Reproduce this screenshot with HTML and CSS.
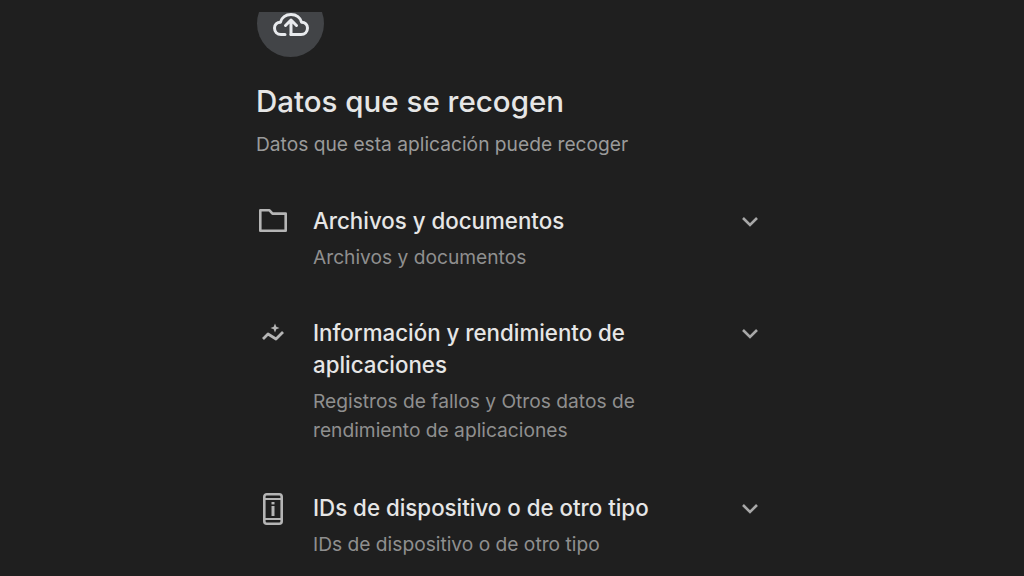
FILE: index.html
```html
<!DOCTYPE html>
<html lang="es">
<head>
<meta charset="utf-8">
<title>Datos que se recogen</title>
<link rel="stylesheet" href="styles.css">
</head>
<body>
<main class="page">
  <div class="badge-clip">
    <div class="badge">
      <svg class="cloud" viewBox="0 0 36 24" width="36" height="24" fill="none" stroke="currentColor" stroke-width="3" stroke-linecap="round" stroke-linejoin="round">
        <path d="M12 22.5H8C4.2 22.5 1.5 19.6 1.5 16C1.5 12.6 4 10.4 7.5 10.2C8.6 5.6 12.6 2.5 18 2.5C23.4 2.5 27.4 5.6 28.5 10.2C32 10.4 34.5 12.6 34.5 16C34.5 19.6 31.8 22.5 28 22.5H18"/>
        <path d="M18 22.5V8M12.5 13.5L18 8L23.5 13.5"/>
      </svg>
    </div>
  </div>
  <h1 class="title">Datos que se recogen</h1>
  <p class="subtitle">Datos que esta aplicación puede recoger</p>
  <section class="list">
    <article class="row row-a">
      <svg class="icon icon-folder" viewBox="0 0 30 25" width="30" height="25" fill="none" stroke="currentColor" stroke-width="2.6" stroke-linejoin="round">
        <path d="M2.3 2.3H11.5L14.5 5.6H27.7V22.7H2.3Z"/>
      </svg>
      <div class="text">
        <h2 class="head">Archivos y documentos</h2>
        <p class="desc">Archivos y documentos</p>
      </div>
      <svg class="chev" viewBox="0 0 20 12" width="20" height="12" fill="none" stroke="currentColor" stroke-width="2.6"><path d="M3 2L10 9L17 2"/></svg>
    </article>
    <article class="row row-b">
      <svg class="icon icon-trend" viewBox="0 0 30 24" width="30" height="24" fill="none" stroke="currentColor" stroke-width="2.8" stroke-linejoin="round">
        <path d="M5 17L10 12L18 17L25 10"/>
        <path d="M17 1.5L18.3 4.7L21.5 6L18.3 7.3L17 10.5L15.7 7.3L12.5 6L15.7 4.7Z" fill="currentColor" stroke="none"/>
      </svg>
      <div class="text">
        <h2 class="head">Información y rendimiento de aplicaciones</h2>
        <p class="desc">Registros de fallos y Otros datos de rendimiento de aplicaciones</p>
      </div>
      <svg class="chev" viewBox="0 0 20 12" width="20" height="12" fill="none" stroke="currentColor" stroke-width="2.6"><path d="M3 2L10 9L17 2"/></svg>
    </article>
    <article class="row row-c">
      <svg class="icon icon-device" viewBox="0 0 30 32" width="30" height="32" fill="none" stroke="currentColor" stroke-width="2.6" stroke-linejoin="round">
        <rect x="6.3" y="1.3" width="17.4" height="29.4" rx="2.5"/>
        <path d="M6.5 6H23.5M6.5 26H23.5" stroke-width="2"/>
        <path d="M15 13V23" stroke-width="3"/>
        <path d="M15 9V11.4" stroke-width="3"/>
      </svg>
      <div class="text">
        <h2 class="head">IDs de dispositivo o de otro tipo</h2>
        <p class="desc">IDs de dispositivo o de otro tipo</p>
      </div>
      <svg class="chev" viewBox="0 0 20 12" width="20" height="12" fill="none" stroke="currentColor" stroke-width="2.6"><path d="M3 2L10 9L17 2"/></svg>
    </article>
  </section>
</main>
</body>
</html>
```
FILE: styles.css
```css
html, body { margin: 0; padding: 0; height: 100%; overflow: hidden; }
body { background: #1f1f1f; color: #e6e6e6; font-family: Inter, Roboto, sans-serif; }
.page { width: 504px; height: 576px; margin-left: 257px; padding-top: 12px; box-sizing: border-box; }
.badge-clip { width: 67px; height: 45px; overflow: hidden; }
.badge { width: 67px; height: 67px; margin-top: -22px; border-radius: 50%; background: #424447; color: #e8eaed; display: flex; justify-content: center; padding-top: 22px; box-sizing: border-box; }
.cloud { margin-top: 0; }
.title { margin: 26px 0 0 -1px; font-size: 29.5px; line-height: 36px; font-weight: 500; color: #e6e6e6; }
.subtitle { margin: 11px 0 0 -1px; font-size: 19.2px; line-height: 28px; color: #9a9a9a; }
.list { display: flex; flex-direction: column; margin-top: 47px; }
.row { display: grid; grid-template-columns: 56px 1fr 20px; align-items: start; }
.row-b { margin-top: 45px; }
.row-c { margin-top: 46.5px; }
.icon { color: #b5b5b5; margin-left: 1px; }
.icon-folder { margin-top: 3px; }
.icon-trend { margin-top: 5px; }
.icon-device { margin-top: 1px; }
.text { width: 340px; }
.head { margin: 0; font-size: 22.3px; line-height: 32px; font-weight: 500; color: #e6e6e6; }
.desc { margin: 6px 0 0; font-size: 19.2px; line-height: 29px; color: #8f8f8f; }
.chev { color: #a8a8a8; margin-top: 11px; justify-self: end; margin-right: 1px; }
```
